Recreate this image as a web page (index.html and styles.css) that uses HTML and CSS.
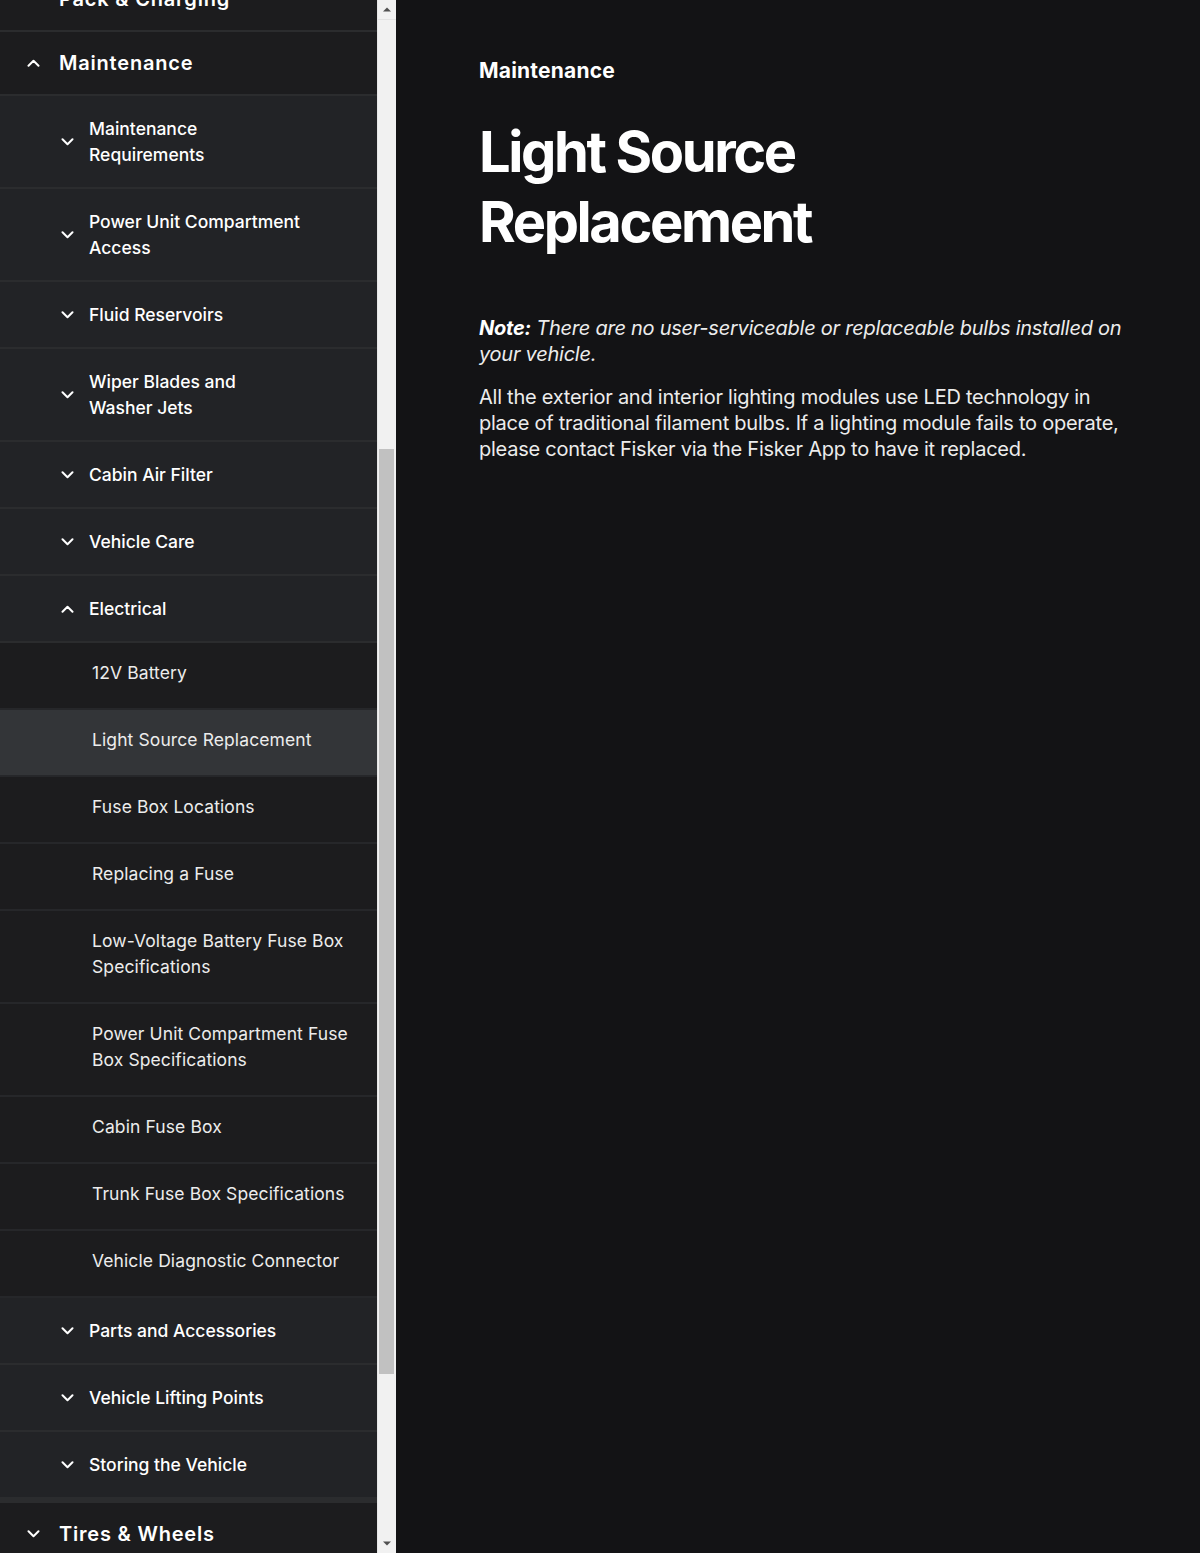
FILE: index.html
```
<!DOCTYPE html>
<html lang="en">
<head>
<meta charset="utf-8">
<title>Light Source Replacement</title>
<link rel="stylesheet" href="styles.css">
</head>
<body>
<aside class="side">
<nav class="sidebar" id="sidebar">
  <div class="nav-top-pad"></div>
  <div class="sec"><span class="chev"><svg viewBox="0 0 13 8"><path d="M1.5 1.2l5 5 5-5"/></svg></span><span class="sec-label">Introduction</span></div>
  <div class="sec"><span class="chev"><svg viewBox="0 0 13 8"><path d="M1.5 1.2l5 5 5-5"/></svg></span><span class="sec-label">Overview</span></div>
  <div class="sec"><span class="chev"><svg viewBox="0 0 13 8"><path d="M1.5 1.2l5 5 5-5"/></svg></span><span class="sec-label">Opening &amp; Closing</span></div>
  <div class="sec"><span class="chev"><svg viewBox="0 0 13 8"><path d="M1.5 1.2l5 5 5-5"/></svg></span><span class="sec-label">Seats &amp; Safety</span></div>
  <div class="sec"><span class="chev"><svg viewBox="0 0 13 8"><path d="M1.5 1.2l5 5 5-5"/></svg></span><span class="sec-label">Controls</span></div>
  <div class="sec"><span class="chev"><svg viewBox="0 0 13 8"><path d="M1.5 1.2l5 5 5-5"/></svg></span><span class="sec-label">Displays</span></div>
  <div class="sec"><span class="chev"><svg viewBox="0 0 13 8"><path d="M1.5 1.2l5 5 5-5"/></svg></span><span class="sec-label">Climate Control</span></div>
  <div class="sec"><span class="chev"><svg viewBox="0 0 13 8"><path d="M1.5 1.2l5 5 5-5"/></svg></span><span class="sec-label">Driving</span></div>
  <div class="sec"><span class="chev"><svg viewBox="0 0 13 8"><path d="M1.5 1.2l5 5 5-5"/></svg></span><span class="sec-label">Driver Assistance</span></div>
  <div class="sec"><span class="chev"><svg viewBox="0 0 13 8"><path d="M1.5 1.2l5 5 5-5"/></svg></span><span class="sec-label">Fisker App</span></div>
  <div class="sec"><span class="chev"><svg viewBox="0 0 13 8"><path d="M1.5 1.2l5 5 5-5"/></svg></span><span class="sec-label">High Voltage Battery<br>Pack &amp; Charging</span></div>

  <div class="sec" id="maint"><span class="chev"><svg viewBox="0 0 13 8"><path d="M1.5 6.8l5-5 5 5"/></svg></span><span class="sec-label">Maintenance</span></div>
  <div class="subgroup">
    <div class="sub"><span class="chev"><svg viewBox="0 0 13 8"><path d="M1.5 1.2l5 5 5-5"/></svg></span><span class="sub-label">Maintenance<br>Requirements</span></div>
    <div class="sub"><span class="chev"><svg viewBox="0 0 13 8"><path d="M1.5 1.2l5 5 5-5"/></svg></span><span class="sub-label">Power Unit Compartment<br>Access</span></div>
    <div class="sub"><span class="chev"><svg viewBox="0 0 13 8"><path d="M1.5 1.2l5 5 5-5"/></svg></span><span class="sub-label">Fluid Reservoirs</span></div>
    <div class="sub"><span class="chev"><svg viewBox="0 0 13 8"><path d="M1.5 1.2l5 5 5-5"/></svg></span><span class="sub-label">Wiper Blades and<br>Washer Jets</span></div>
    <div class="sub"><span class="chev"><svg viewBox="0 0 13 8"><path d="M1.5 1.2l5 5 5-5"/></svg></span><span class="sub-label">Cabin Air Filter</span></div>
    <div class="sub"><span class="chev"><svg viewBox="0 0 13 8"><path d="M1.5 1.2l5 5 5-5"/></svg></span><span class="sub-label">Vehicle Care</span></div>
    <div class="sub"><span class="chev"><svg viewBox="0 0 13 8"><path d="M1.5 6.8l5-5 5 5"/></svg></span><span class="sub-label">Electrical</span></div>
    <div class="leafgroup">
      <a class="leaf">12V Battery</a>
      <a class="leaf active">Light Source Replacement</a>
      <a class="leaf">Fuse Box Locations</a>
      <a class="leaf">Replacing a Fuse</a>
      <a class="leaf">Low-Voltage Battery Fuse Box<br>Specifications</a>
      <a class="leaf">Power Unit Compartment Fuse<br>Box Specifications</a>
      <a class="leaf">Cabin Fuse Box</a>
      <a class="leaf">Trunk Fuse Box Specifications</a>
      <a class="leaf">Vehicle Diagnostic Connector</a>
    </div>
    <div class="sub"><span class="chev"><svg viewBox="0 0 13 8"><path d="M1.5 1.2l5 5 5-5"/></svg></span><span class="sub-label">Parts and Accessories</span></div>
    <div class="sub"><span class="chev"><svg viewBox="0 0 13 8"><path d="M1.5 1.2l5 5 5-5"/></svg></span><span class="sub-label">Vehicle Lifting Points</span></div>
    <div class="sub"><span class="chev"><svg viewBox="0 0 13 8"><path d="M1.5 1.2l5 5 5-5"/></svg></span><span class="sub-label">Storing the Vehicle</span></div>
  </div>

  <div class="sec"><span class="chev"><svg viewBox="0 0 13 8"><path d="M1.5 1.2l5 5 5-5"/></svg></span><span class="sec-label">Tires &amp; Wheels</span></div>
  <div class="sec"><span class="chev"><svg viewBox="0 0 13 8"><path d="M1.5 1.2l5 5 5-5"/></svg></span><span class="sec-label">Troubleshooting</span></div>
  <div class="sec"><span class="chev"><svg viewBox="0 0 13 8"><path d="M1.5 1.2l5 5 5-5"/></svg></span><span class="sec-label">Specifications</span></div>
  <div class="sec"><span class="chev"><svg viewBox="0 0 13 8"><path d="M1.5 1.2l5 5 5-5"/></svg></span><span class="sec-label">Consumer Information</span></div>
</nav>
<div class="scrollbar" aria-hidden="true">
  <div class="sb-btn"><svg viewBox="0 0 8 5"><polygon points="0,4.5 4,0.5 8,4.5"/></svg></div>
  <div class="sb-track">
    <div class="sb-space"></div>
    <div class="sb-thumb"></div>
  </div>
  <div class="sb-btn"><svg viewBox="0 0 8 5"><polygon points="0,0.5 8,0.5 4,4.5"/></svg></div>
</div>
</aside>

<main class="content">
  <div class="crumb">Maintenance</div>
  <h1 class="title">Light Source<br>Replacement</h1>
  <p class="note"><b>Note:</b> There are no user-serviceable or replaceable bulbs installed on your vehicle.</p>
  <p class="body-text">All the exterior and interior lighting modules use LED technology in place of traditional filament bulbs. If a lighting module fails to operate, please contact Fisker via the Fisker App to have it replaced.</p>
</main>
<script src="script.js"></script>
</body>
</html>
```
FILE: styles.css
```
* { box-sizing: border-box; }
html, body { margin: 0; padding: 0; }
body {
  display: flex;
  height: 1553px;
  overflow: hidden;
  background: #131315;
  color: #fff;
  font-family: Inter, "Noto Sans", "Liberation Sans", sans-serif;
}

.side {
  flex: 0 0 396px;
  display: flex;
  height: 1553px;
}
.sidebar {
  flex: 0 0 377px;
  width: 377px;
  height: 1553px;
  overflow: hidden;
  background: #1c1c1e;
  white-space: nowrap;
}

.scrollbar {
  flex: 0 0 19px;
  display: flex;
  flex-direction: column;
  background: #f1f1f1;
  border-left: 1px solid #e6e6e6;
}
.sb-btn {
  flex: 0 0 20px;
  display: flex;
  align-items: center;
  justify-content: center;
}
.sb-btn:first-child { border-bottom: 1px solid #e2e2e2; }
.sb-btn svg { width: 8px; height: 5px; fill: #505050; }
.sb-track {
  flex: 1;
  display: flex;
  flex-direction: column;
  padding: 0 2px 0 1px;
}
.sb-space { flex: 0 0 429px; }
.sb-thumb {
  flex: 0 0 925px;
  background: #c1c1c1;
}

.nav-top-pad { height: 26px; }

.chev { flex: 0 0 13px; width: 13px; height: 8px; display: flex; }
.chev svg { width: 13px; height: 8px; fill: none; stroke: #fff; stroke-width: 2; stroke-linecap: round; stroke-linejoin: round; }

.sec {
  display: flex;
  align-items: center;
  gap: 19px;
  padding: 16px 20px 16px 27px;
  background: #1c1c1e;
  border-bottom: 2px solid #2b2c2e;
}
.sec-label {
  font-size: 20px;
  line-height: 30px;
  font-weight: 600;
  letter-spacing: 0.8px;
}

.subgroup { border-bottom: 4px solid #2b2c2e; }

.sub {
  display: flex;
  align-items: center;
  gap: 15px;
  padding: 19.5px 20px 19.5px 61px;
  background: #222326;
  border-bottom: 2px solid #2b2c2e;
}
.sub-label {
  font-size: 17.5px;
  line-height: 26px;
  font-weight: 500;
  letter-spacing: 0;
}

.leaf {
  display: block;
  padding: 17px 20px 22px 92px;
  background: #1c1c1e;
  border-bottom: 2px solid #26272a;
  font-size: 17.5px;
  line-height: 26px;
  font-weight: 400;
  letter-spacing: 0.1px;
  color: #ececec;
}
.leaf.active { background: #333538; }

.content {
  flex: 0 0 auto;
  width: 733px;
  padding: 56px 0 0 83px;
}
.crumb {
  font-size: 21px;
  line-height: 30px;
  font-weight: 700;
  letter-spacing: 0.2px;
}
.title {
  margin: 31px 0 0;
  font-size: 56px;
  line-height: 70px;
  font-weight: 700;
  letter-spacing: -2.4px;
}
.note {
  margin: 58px 0 0;
  font-size: 20px;
  line-height: 26px;
  font-style: italic;
  letter-spacing: -0.25px;
  color: #ececec;
}
.note b { font-weight: 700; color: #fff; }
.body-text {
  margin: 17px 0 0;
  font-size: 20px;
  line-height: 26px;
  letter-spacing: -0.25px;
  color: #ececec;
}
```
FILE: script.js
```
(function () {
  var s = document.getElementById('sidebar');
  var m = document.getElementById('maint');
  s.scrollTop = m.getBoundingClientRect().top - s.getBoundingClientRect().top - 32;
})();
```
